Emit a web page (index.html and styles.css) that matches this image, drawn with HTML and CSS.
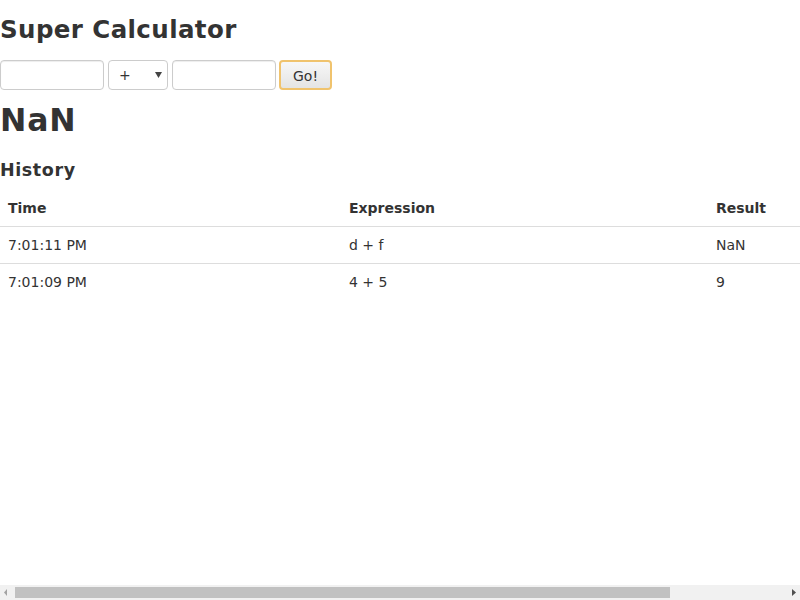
FILE: index.html
```html
<!DOCTYPE html>
<html>
<head>
<meta charset="utf-8">
<title>Super Calculator</title>
<link rel="stylesheet" href="styles.css">
</head>
<body>
<div class="container">
  <h3 class="title">Super Calculator</h3>
  <form class="calc-form">
    <input class="field" type="text">
    <select class="op">
      <option>+</option>
      <option>-</option>
      <option>*</option>
      <option>/</option>
    </select>
    <input class="field" type="text">
    <button class="go" type="button">Go!</button>
  </form>
  <h2 class="result">NaN</h2>
  <h4 class="history-title">History</h4>
  <table class="history">
    <thead>
      <tr>
        <th class="col-time">Time</th>
        <th class="col-expr">Expression</th>
        <th class="col-result">Result</th>
      </tr>
    </thead>
    <tbody>
      <tr>
        <td>7:01:11 PM</td>
        <td>d + f</td>
        <td>NaN</td>
      </tr>
      <tr>
        <td>7:01:09 PM</td>
        <td>4 + 5</td>
        <td>9</td>
      </tr>
    </tbody>
  </table>
</div>
<div class="hscroll" aria-hidden="true">
  <svg class="arrow" width="15" height="15" viewBox="0 0 15 15"><path d="M7 4 L4 7.5 L7 11 Z" fill="#a3a3a3"/></svg>
  <div class="track"><div class="thumb"></div></div>
  <svg class="arrow" width="15" height="15" viewBox="0 0 15 15"><path d="M7 4 L11 7.5 L7 11 Z" fill="#505050"/></svg>
</div>
</body>
</html>
```
FILE: styles.css
```css
html, body {
  margin: 0;
  padding: 0;
  background: #fff;
}
body {
  font-family: "DejaVu Sans", sans-serif;
  font-size: 14px;
  line-height: 20px;
  color: #333;
}
.container {
  width: 940px;
}
.title {
  margin: 10px 0;
  font-size: 24.5px;
  line-height: 40px;
  font-weight: bold;
  letter-spacing: 0.4px;
}
.calc-form {
  display: flex;
  align-items: flex-start;
  gap: 4px;
  margin: 0;
  height: 30px;
}
.field {
  box-sizing: border-box;
  width: 104px;
  height: 30px;
  padding: 4px 6px;
  border: 1px solid #ccc;
  border-radius: 4px;
  font-family: "DejaVu Sans", sans-serif;
  font-size: 14px;
  color: #555;
  background: #fff;
  box-shadow: inset 0 1px 1px rgba(0,0,0,0.075);
  margin: 0;
}
.op {
  box-sizing: border-box;
  width: 60px;
  height: 30px;
  margin: 0;
  padding: 0 0 0 10px;
  border: 1px solid #ccc;
  border-radius: 4px;
  font-family: "DejaVu Sans", sans-serif;
  font-size: 14px;
  color: #333;
  -webkit-appearance: none;
  appearance: none;
  background: #fff url("data:image/svg+xml;utf8,<svg xmlns='http://www.w3.org/2000/svg' width='7' height='6'><path d='M0 0 L7 0 L3.5 6 Z' fill='%23444'/></svg>") no-repeat right 5px center;
}
.go {
  box-sizing: border-box;
  height: 30px;
  width: 53px;
  margin: 0 0 0 -1px;
  padding: 4px 10px;
  font-family: "DejaVu Sans", sans-serif;
  font-size: 14px;
  line-height: 20px;
  color: #333;
  border: 2px solid #f0c36d;
  border-radius: 4px;
  background: linear-gradient(#f7f7f7, #e4e4e4);
}
.result {
  margin: 10px 0 0;
  font-size: 31.5px;
  line-height: 40px;
  font-weight: bold;
  letter-spacing: 0.8px;
}
.history-title {
  margin: 20px 0 10px;
  font-size: 17.5px;
  line-height: 20px;
  font-weight: bold;
  letter-spacing: 0.6px;
}
.history {
  width: 940px;
  border-collapse: collapse;
  border-spacing: 0;
  margin-bottom: 20px;
}
.history th,
.history td {
  padding: 8px;
  line-height: 20px;
  text-align: left;
  vertical-align: top;
}
.history th {
  font-weight: bold;
}
.history td {
  border-top: 1px solid #ddd;
}
.col-time { width: 325px; }
.col-expr { width: 351px; }
.col-result { width: 216px; }

/* horizontal page scrollbar overlay */
.hscroll {
  position: fixed;
  left: 0;
  right: 0;
  bottom: 0;
  height: 15px;
  display: flex;
  background: #f1f1f1;
}
.hscroll .arrow {
  flex: 0 0 15px;
  display: block;
}
.hscroll .track {
  flex: 1;
  padding: 2px 0;
  box-sizing: border-box;
}
.hscroll .thumb {
  width: 655px;
  height: 11px;
  background: #c1c1c1;
}
```
